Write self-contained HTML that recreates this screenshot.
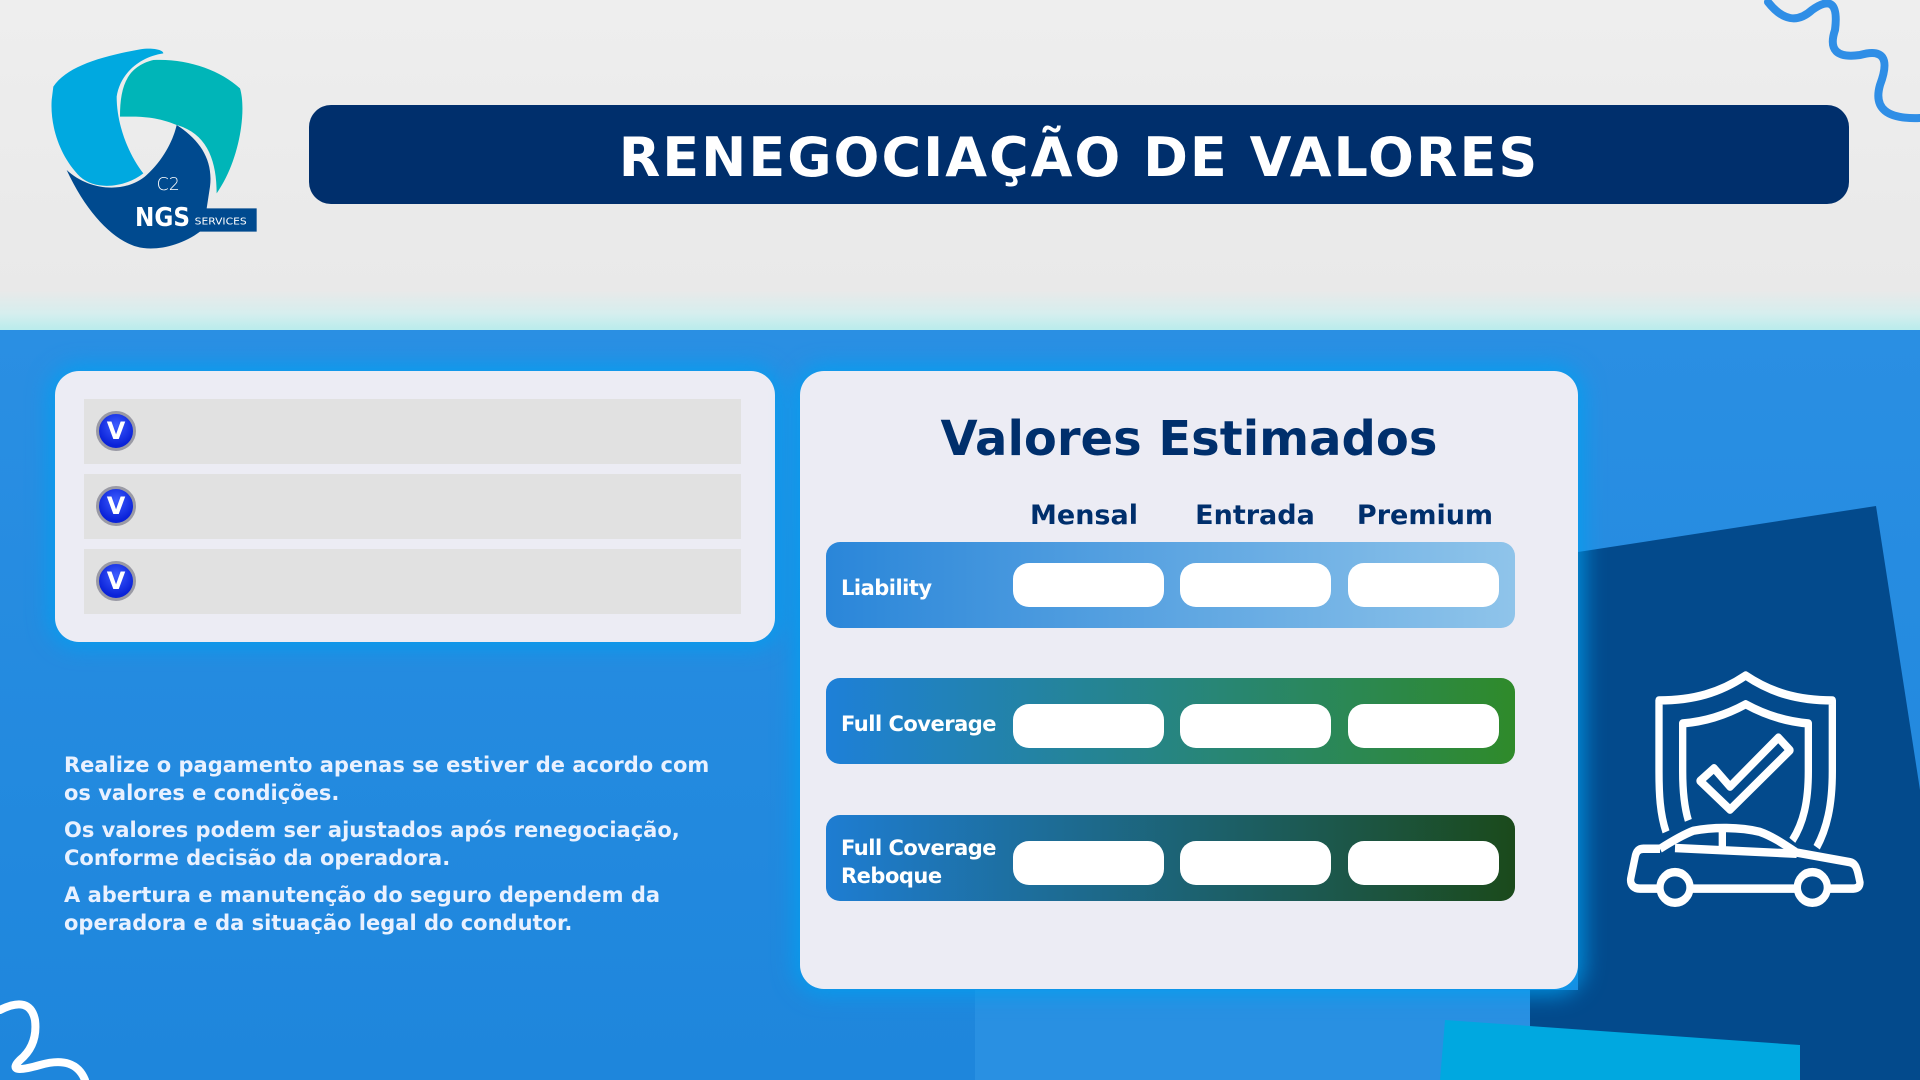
<!DOCTYPE html>
<html style="overflow:hidden;width:1920px;height:1080px"><head><meta charset="utf-8"><style>
*{margin:0;padding:0;box-sizing:border-box}
body{width:1920px;height:1080px;overflow:hidden;position:relative;font-family:"DejaVu Sans","Liberation Sans",sans-serif;background:#1f88df}
.top{position:absolute;left:0;top:0;width:1920px;height:330px;background:linear-gradient(180deg,#eeeeee 0%,#e9e9e9 88%,#d6eeee 95%,#b9ecec 100%)}
.blue{position:absolute;left:0;top:330px;width:1920px;height:750px;background:linear-gradient(180deg,#2a8fe3,#1e86dc)}
.title{position:absolute;left:309px;top:105px;width:1540px;height:99px;background:#002f6c;border-radius:22px;color:#fff;font-weight:bold;font-size:54px;letter-spacing:2px;text-align:center;line-height:106px}
.card{position:absolute;background:#ececf4;border-radius:24px;box-shadow:0 0 22px 6px rgba(0,160,240,.8)}
.row{position:absolute;left:29px;width:657px;height:65px;background:#e1e1e1}
.v{position:absolute;left:12px;top:12px;width:40px;height:40px;border-radius:50%;background:radial-gradient(circle at 50% 35%,#3d5cff,#0a22d8 70%);border:3px solid #9a9aa5;color:#fff;font-weight:bold;font-size:24px;text-align:center;line-height:34px}
.txt{position:absolute;left:64px;color:#e9f1ff;font-weight:bold;font-size:21px;line-height:28px;white-space:nowrap}
.hd{position:absolute;top:500px;color:#002f6c;font-weight:bold;font-size:27px;width:200px;text-align:center}
.tr{position:absolute;left:826px;width:689px;height:86px;border-radius:14px}
.tr .l{position:absolute;left:15px;color:#fff;font-weight:bold;font-size:21px;line-height:28px;letter-spacing:-0.5px}
.p{position:absolute;width:151px;height:44px;background:#fff;border-radius:16px}
</style></head><body>
<div class="top"></div>
<div class="blue"></div>
<div style="position:absolute;left:975px;top:990px;width:560px;height:90px;background:#2990e2"></div>
<svg style="position:absolute;left:0;top:0" width="1920" height="1080">
<polygon points="1578,552 1876,506 1920,790 1920,1080 1530,1080 1530,990 1578,990" fill="#034a8c"/>
<polygon points="1445,1020 1800,1045 1800,1080 1440,1080" fill="#00a8e0"/>
<path d="M1768,2 Q1790,30 1812,10 Q1840,-10 1835,30 Q1825,60 1860,55 Q1895,45 1880,85 Q1870,120 1920,118" fill="none" stroke="#2f8ee6" stroke-width="8" stroke-linecap="round"/>
<path d="M0,1010 Q30,995 35,1020 Q38,1045 20,1060 Q5,1075 40,1065 Q75,1055 85,1080" fill="none" stroke="#fff" stroke-width="8" stroke-linecap="round"/>
</svg>
<svg style="position:absolute;left:0;top:0" width="400" height="330" viewBox="0 0 1200 990">
<path d="M160,260 C200,200 300,170 420,148 C460,142 490,150 490,160 C420,170 360,220 350,290 C350,380 390,470 430,520 C380,560 290,575 240,530 C180,470 150,380 155,300 Z" fill="#00a9e0"/>
<path d="M360,350 C360,260 380,200 460,180 C560,175 660,210 720,265 C740,330 720,480 650,580 C650,480 620,400 530,375 C460,345 400,350 360,350Z" fill="#00b5b8"/>
<path d="M200,510 C270,575 380,580 440,525 C490,480 520,420 530,375 C600,420 640,480 630,560 L620,625 L770,625 L770,695 L600,695 C540,740 460,755 410,740 C340,720 260,640 200,510 Z" fill="#004a8f"/>
<text x="470" y="570" fill="#fff" font-size="52" font-family="DejaVu Sans" font-weight="300">C2</text>
<text x="405" y="678" fill="#fff" font-size="76" font-family="DejaVu Sans" font-weight="bold" textLength="165" lengthAdjust="spacingAndGlyphs">NGS</text>
<text x="584" y="674" fill="#fff" font-size="30" font-family="DejaVu Sans" textLength="156" lengthAdjust="spacingAndGlyphs">SERVICES</text>
</svg>
<div class="title">RENEGOCIAÇÃO DE VALORES</div>
<div class="card" style="left:55px;top:371px;width:720px;height:271px">
<div class="row" style="top:28px"><div class="v">V</div></div>
<div class="row" style="top:103px"><div class="v">V</div></div>
<div class="row" style="top:178px"><div class="v">V</div></div>
</div>
<div class="txt" style="top:751px">Realize o pagamento apenas se estiver de acordo com<br>os valores e condições.</div>
<div class="txt" style="top:816px">Os valores podem ser ajustados após renegociação,<br>Conforme decisão da operadora.</div>
<div class="txt" style="top:881px">A abertura e manutenção do seguro dependem da<br>operadora e da situação legal do condutor.</div>
<div class="card" style="left:800px;top:371px;width:778px;height:618px"></div>
<div style="position:absolute;left:800px;top:411px;width:778px;text-align:center;color:#002f6c;font-weight:bold;font-size:48px">Valores Estimados</div>
<div class="hd" style="left:984px">Mensal</div>
<div class="hd" style="left:1155px">Entrada</div>
<div class="hd" style="left:1325px">Premium</div>
<div class="tr" style="top:542px;background:linear-gradient(90deg,#2a86d9,#8fc4ea)"><div class="l" style="top:32px">Liability</div></div>
<div class="tr" style="top:678px;background:linear-gradient(90deg,#1e80d8,#2f8a2a)"><div class="l" style="top:32px">Full Coverage</div></div>
<div class="tr" style="top:815px;background:linear-gradient(90deg,#1e7dd2,#1b4a1b)"><div class="l" style="top:19px">Full Coverage<br>Reboque</div></div>
<div class="p" style="left:1013px;top:563px"></div><div class="p" style="left:1180px;top:563px"></div><div class="p" style="left:1348px;top:563px"></div>
<div class="p" style="left:1013px;top:704px"></div><div class="p" style="left:1180px;top:704px"></div><div class="p" style="left:1348px;top:704px"></div>
<div class="p" style="left:1013px;top:841px"></div><div class="p" style="left:1180px;top:841px"></div><div class="p" style="left:1348px;top:841px"></div>
<svg style="position:absolute;left:1560px;top:480px" width="360" height="598" viewBox="0 0 1080 1560" preserveAspectRatio="none">
<g fill="none" stroke="#fff" stroke-width="22" stroke-linejoin="round" stroke-linecap="butt">
<path d="M318,918 C300,870 297,820 297,760 L297,575 C400,575 480,555 557,510 C634,555 714,575 817,575 L817,760 C817,850 800,910 770,958"/>
<path d="M385,888 C372,850 368,810 368,760 L368,635 C440,630 500,612 557,585 C614,612 674,630 745,635 L745,760 C745,840 730,895 697,940"/>
<path d="M420,785 L462,752 L510,800 L655,672 L690,705 L510,860 Z"/>
<path d="M300,962 C340,940 370,925 400,915 C460,905 540,905 600,918 C640,930 680,955 710,972 L870,997 C885,1000 890,1010 895,1030 L900,1050 C900,1062 890,1066 880,1066 L805,1066 M710,1066 L395,1066 M300,1066 L240,1066 C220,1066 210,1055 212,1040 L225,985 C228,970 235,962 250,962 L300,962"/>
<path d="M345,960 L710,975 M487,918 L487,968"/>
<ellipse cx="345" cy="1063" rx="45" ry="40"/><ellipse cx="757" cy="1063" rx="45" ry="40"/>
</g></svg>
</body></html>
